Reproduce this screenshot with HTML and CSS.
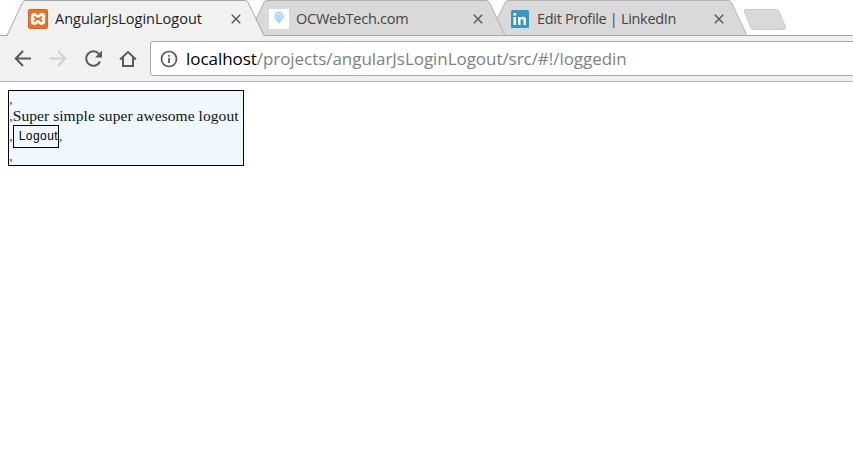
FILE: index.html
```
<!DOCTYPE html>
<html lang="en">
<head>
<meta charset="utf-8">
<title>AngularJsLoginLogout</title>
<link rel="stylesheet" href="styles.css">
</head>
<body>
<header class="tabstrip">
  <svg class="tab-shapes" width="853" height="36" viewBox="0 0 853 36">
    <path d="M489 35.5L505.500 1.800Q506.500.5 508 .5H728Q730.500.5 731.500 2.500L747 35.500Z" fill="#d9d9d9" stroke="#b5b5b5"/>
    <path d="M248 35.500L264 2.500Q265 .5 267 .5H486Q488.500.5 489.500 2.500L505 35.500Z" fill="#d9d9d9" stroke="#b0b0b0"/>
    <path d="M0 35.500H853" stroke="#a5a5a5"/>
    <path d="M7 36L22.500 2.500Q23.500.5 25.500.5H245Q247 .5 248 2.500L264 36Z" fill="#f1f1f1"/>
    <path d="M0 35.500H7L22.500 2.500Q23.500.5 25.500.5H245Q247 .5 248 2.500L264 35.500" fill="none" stroke="#a5a5a5"/>
    <path d="M746 9.500H776Q778 9.500 779 11L785.500 27Q786 29.500 784 29.500H754Q752 29.500 751 28L744.500 12Q743.500 9.500 746 9.500Z" fill="#d9d9d9" stroke="#cdcdcd"/>
  </svg>
  <div class="tab tab-one">
    <svg class="favicon" width="20" height="20" viewBox="0 0 20 20"><rect width="20" height="20" rx="2" fill="#d0662a"/><rect x="1" y="1" width="18" height="18" rx="1" fill="#ee7122"/><path d="M6.500 5.500C3.500 5.500 3.500 9.500 5.500 10C3.500 10.500 3.500 14.500 6.500 14.500C8.500 14.500 8.500 12.500 10 12.500S11.500 14.500 13.500 14.500C16.500 14.500 16.500 10.500 14.500 10C16.500 9.500 16.500 5.500 13.500 5.500C11.500 5.500 11.500 7.500 10 7.500S8.500 5.500 6.500 5.500Z" fill="none" stroke="#fff" stroke-width="2.800" stroke-linejoin="round"/></svg>
    <span class="title title-one">AngularJsLoginLogout</span>
    <svg class="close" width="10" height="10" viewBox="0 0 10 10"><path d="M.8.8L9.200 9.200M9.200.8L.8 9.200"/></svg>
  </div>
  <div class="tab tab-two">
    <svg class="favicon" width="20" height="20" viewBox="0 0 20 20"><rect width="20" height="20" fill="#fff"/><path d="M7.500 11L10 15L12.500 11Z" fill="#9bd0fb"/><circle cx="10" cy="7.500" r="4" fill="#d3ebff" stroke="#9bd2ff" stroke-width="1.400"/><path d="M8 7h4M8 9h4" stroke="#87c7fa"/></svg>
    <span class="title title-two">OCWebTech.com</span>
    <svg class="close" width="10" height="10" viewBox="0 0 10 10"><path d="M.8.8L9.200 9.200M9.200.8L.8 9.200"/></svg>
  </div>
  <div class="tab tab-three">
    <svg class="favicon" width="18" height="18" viewBox="0 0 18 18"><rect width="18" height="18" rx="1.500" fill="#3795c8"/><path d="M2.500 7H5V15H2.500ZM7 7H9.400V8.200C10.800 6 15 6.300 15 10V15H12.500V10.800C12.500 8.300 9.500 8.400 9.500 10.800V15H7Z" fill="#fff"/><circle cx="3.750" cy="4.200" r="1.500" fill="#fff"/></svg>
    <span class="title title-three">Edit Profile | LinkedIn</span>
    <svg class="close" width="10" height="10" viewBox="0 0 10 10"><path d="M.8.8L9.200 9.200M9.200.8L.8 9.200"/></svg>
  </div>
</header>
<nav class="toolbar">
  <svg class="nav-icons" width="150" height="45" viewBox="0 0 150 45" fill="none" stroke="#5a5a5a" stroke-width="2">
    <path d="M31 22.500H16M23 15L15.800 22.500L23 30"/>
    <path d="M50 22.500H65M58 15L65.200 22.500L58 30" stroke="#d0d0d0"/>
    <path d="M99 18A7.200 7.200 0 1 0 100 25.500"/>
    <path d="M102 14.500V21.500H95Z" fill="#5a5a5a" stroke="none"/>
    <path d="M120 23.500L128 16L136 23.500M123 21.500V30H133V21.500"/>
  </svg>
  <div class="address">
    <svg width="18" height="18" viewBox="0 0 18 18" fill="none" stroke="#5a5a5a"><circle cx="9" cy="9" r="7.500" stroke-width="1.700"/><path d="M9 8V13M9 5V6.800" stroke-width="1.800"/></svg>
    <span class="url"><span class="host">localhost</span>/projects/angularJsLoginLogout/src/#!/loggedin</span>
  </div>
</nav>
<main class="panel">
  <div class="line">,</div>
  <div class="line">,<span class="message">Super simple super awesome logout</span></div>
  <div class="line action">,<button class="logout">Logout</button>,</div>
  <div class="line">,</div>
</main>
</body>
</html>
```
FILE: styles.css
```
* { box-sizing: border-box; }
body { margin: 0; background: #fff; overflow: hidden; }
svg { display: block; flex: none; }
.tabstrip { position: relative; display: flex; height: 36px; font: 15px/20px "Open Sans", sans-serif; color: #444; }
.tab-shapes { position: absolute; top: 0; left: 0; }
.tab { position: relative; display: flex; align-items: center; height: 38px; flex: none; }
.tab-one { width: 241px; margin-left: 28px; color: #222; }
.tab-two { width: 242px; }
.tab-three { width: 213px; }
.title { margin-left: 7px; white-space: nowrap; font-size: 14.5px; }
.title-one { letter-spacing: 0; }
.title-two { letter-spacing: -.25px; }
.title-three { margin-left: 8px; letter-spacing: -.32px; }
.close { margin-left: auto; margin-right: 28px; stroke: #5a5a5a; stroke-width: 1.5; }
.tab-three .close { margin-right: 0; }
.toolbar { display: flex; height: 46px; background: #f1f1f1; border-bottom: 1px solid #b5b5b5; }
.address { display: flex; align-items: center; flex: 1; height: 35px; margin: 5px -2px 0 0; padding-left: 9px; background: #fff; border: 1px solid #a9a9a9; border-radius: 3px; }
.url { margin-left: 8px; font: 17px/24px "Open Sans", sans-serif; letter-spacing: -.05px; color: #808080; white-space: nowrap; }
.host { color: #000; }
.panel { width: 236px; height: 76px; margin: 8px 0 0 8px; border: 1px solid #000; background: #f0f8ff; font: 15px/17px "Liberation Serif", serif; color: #555; }
.line { display: flex; height: 17px; white-space: nowrap; }
.message { font-size: 15.5px; line-height: 15px; letter-spacing: .06px; color: #111; }
.action { height: 23px; align-items: center; }
.logout { width: 46px; height: 23px; padding: 0 0 1px 5px; border: 1px solid #000; background: #f0f8ff; color: #000; font: 12px/20px "Liberation Sans", sans-serif; letter-spacing: .45px; text-align: left; }
```
